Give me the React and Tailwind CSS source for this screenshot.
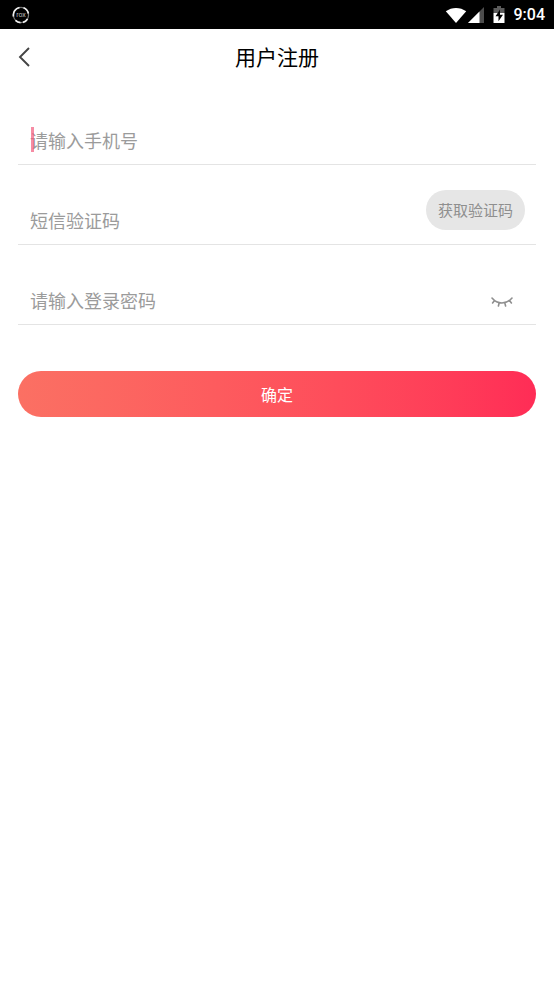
const inputClass =
  "block h-12 w-full min-w-0 flex-1 bg-transparent pl-3 text-lg text-gray-800 placeholder:text-[#9b9b9b] outline-none";

function StatusBar() {
  return (
    <div className="flex h-[29px] items-center justify-between bg-black pr-[9px] pl-3 text-white">
      <svg className="size-[18px]" viewBox="0 0 18 18" aria-hidden="true">
        <circle cx="9" cy="9" r="7.6" fill="none" stroke="#777" strokeWidth="1.2" />
        <path
          d="M1.5 10.5A7.6 7.6 0 0 1 7.5 1.5M11.5 1.8A7.6 7.6 0 0 1 16.4 7.5M15.5 13A7.6 7.6 0 0 1 11 16.4M8.5 16.6A7.6 7.6 0 0 1 3.5 14.3"
          fill="none"
          stroke="#eee"
          strokeWidth="1.7"
        />
        <text
          x="9"
          y="11"
          textAnchor="middle"
          fill="#bbb"
          className="font-['Roboto','Liberation_Sans',sans-serif] text-[7px]"
        >
          rox
        </text>
      </svg>

      <div className="flex items-center">
        <svg className="h-4 w-[22px]" viewBox="0 0 22 16" aria-hidden="true">
          <path d="M0.8 4.3C6.8-.2 15.2-.2 21.2 4.3L11 16z" fill="#fff" />
        </svg>
        <svg className="ml-px size-4" viewBox="0 0 16 16" aria-hidden="true">
          <path d="M16 0v16H0z" fill="#4d4d4d" />
          <path d="M11.5 4.5V16H0z" fill="#fff" />
        </svg>
        <svg className="mr-[9px] ml-[9px] h-[17px] w-3" viewBox="0 0 12 17" aria-hidden="true">
          <path d="M4 0h4v2h3.500v5H.5V2H4z" fill="#5c5c5c" />
          <path d="M.5 7h11v10H.5z" fill="#fff" />
          <path d="M7 3.500 2.500 10.300h3V15.200L10 8.800H7z" fill="#000" />
        </svg>
        <span className="font-['Roboto','Liberation_Sans',sans-serif] text-base leading-none font-medium">
          9:04
        </span>
      </div>
    </div>
  );
}

function Header() {
  return (
    <header className="grid h-14 grid-cols-[48px_1fr_48px] items-center">
      <button type="button" aria-label="返回" className="flex h-12 items-center justify-center">
        <svg className="h-5 w-3" viewBox="0 0 12 20" fill="none" aria-hidden="true">
          <path d="M11 1 2 10l9 9" stroke="#444" strokeWidth="1.9" />
        </svg>
      </button>
      <h1 className="text-center text-[21px] text-black">用户注册</h1>
    </header>
  );
}

function ClosedEye() {
  return (
    <svg className="h-3 w-[22px]" viewBox="0 0 22 12" fill="none" aria-hidden="true">
      <path
        d="M1 2c5.5 6.6 14.5 6.6 20 0M3.5 4.5 1.6 7M8.2 6.8l-.8 3.2M13.8 6.8l.8 3.2M18.5 4.5 20.4 7"
        stroke="#8f8f8f"
        strokeWidth="1.6"
        strokeLinecap="round"
      />
    </svg>
  );
}

function Field({ children }) {
  return (
    <div className="flex h-20 items-end border-b border-[#e4e4e4]">{children}</div>
  );
}

export default function App() {
  return (
    <div className="min-h-screen bg-white font-['Noto_Sans_CJK_SC',sans-serif]">
      <StatusBar />
      <Header />

      <form className="px-[18px]" onSubmit={(e) => e.preventDefault()}>
        <Field>
          <div className="relative flex-1">
            <input type="tel" aria-label="手机号" placeholder="请输入手机号" className={inputClass} />
            {/* Text cursor */}
            <span className="absolute top-[11px] left-[13px] h-[25px] w-[3px] bg-[#f25b7d]/70" />
          </div>
        </Field>

        <Field>
          <input
            type="text"
            inputMode="numeric"
            aria-label="短信验证码"
            placeholder="短信验证码"
            className={inputClass}
          />
          <button
            type="button"
            className="mr-[11px] mb-3.5 h-10 shrink-0 rounded-full bg-[#e6e6e6] px-3 text-[15px] text-[#8f8f8f]"
          >
            获取验证码
          </button>
        </Field>

        <Field>
          <input
            type="password"
            aria-label="登录密码"
            placeholder="请输入登录密码"
            className={inputClass}
          />
          <button
            type="button"
            aria-label="显示密码"
            className="mr-3 flex h-11 w-11 shrink-0 items-center justify-center"
          >
            <ClosedEye />
          </button>
        </Field>

        <button
          type="submit"
          className="mt-[46px] block h-[46px] w-full rounded-full bg-linear-to-r from-[#fb7063] to-[#ff2c56] text-base text-white"
        >
          确定
        </button>
      </form>
    </div>
  );
}
